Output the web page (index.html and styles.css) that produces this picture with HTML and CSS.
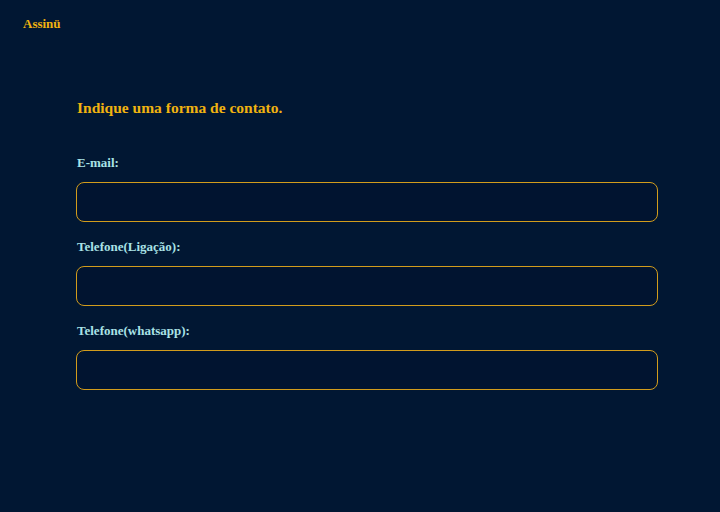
FILE: index.html
```html
<!DOCTYPE html>
<html lang="pt">
<head>
<meta charset="utf-8">
<title>Assinü</title>
<link rel="stylesheet" href="styles.css">
</head>
<body>
<header class="topbar"><span class="logo">Assinü</span></header>
<main class="form">
  <h1 class="title">Indique uma forma de contato.</h1>
  <div class="field">
    <label class="label" for="email">E-mail:</label>
    <input class="input" id="email" type="text">
  </div>
  <div class="field">
    <label class="label" for="tel">Telefone(Ligação):</label>
    <input class="input" id="tel" type="text">
  </div>
  <div class="field">
    <label class="label" for="wpp">Telefone(whatsapp):</label>
    <input class="input" id="wpp" type="text">
  </div>
</main>
</body>
</html>
```
FILE: styles.css
```css
html, body {
  margin: 0;
  padding: 0;
  background: #011733;
  height: 100%;
  font-family: "Liberation Serif", "DejaVu Serif", serif;
}
.topbar {
  padding: 14px 23px 0;
  height: 20px;
}
.logo {
  color: #f0b310;
  font-weight: bold;
  font-size: 13px;
}
.form {
  margin: 0 0 0 76px;
  width: 582px;
  display: flex;
  flex-direction: column;
}
.title {
  margin: 64px 0 0 1px;
  color: #f0b310;
  font-size: 15.5px;
  font-weight: bold;
  line-height: 20px;
}
.field {
  display: flex;
  flex-direction: column;
}
.field:first-of-type { margin-top: 37px; }
.label {
  color: #a9e2e6;
  font-size: 13px;
  font-weight: bold;
  line-height: 16px;
  margin: 0 0 11px 1px;
  height: 16px;
}
.field + .field .label { margin-top: 17px; }
.input {
  box-sizing: border-box;
  height: 40px;
  width: 582px;
  margin: 0;
  border: 1px solid #d29c1c;
  border-radius: 8px;
  background: #011430;
  outline: none;
}
```
